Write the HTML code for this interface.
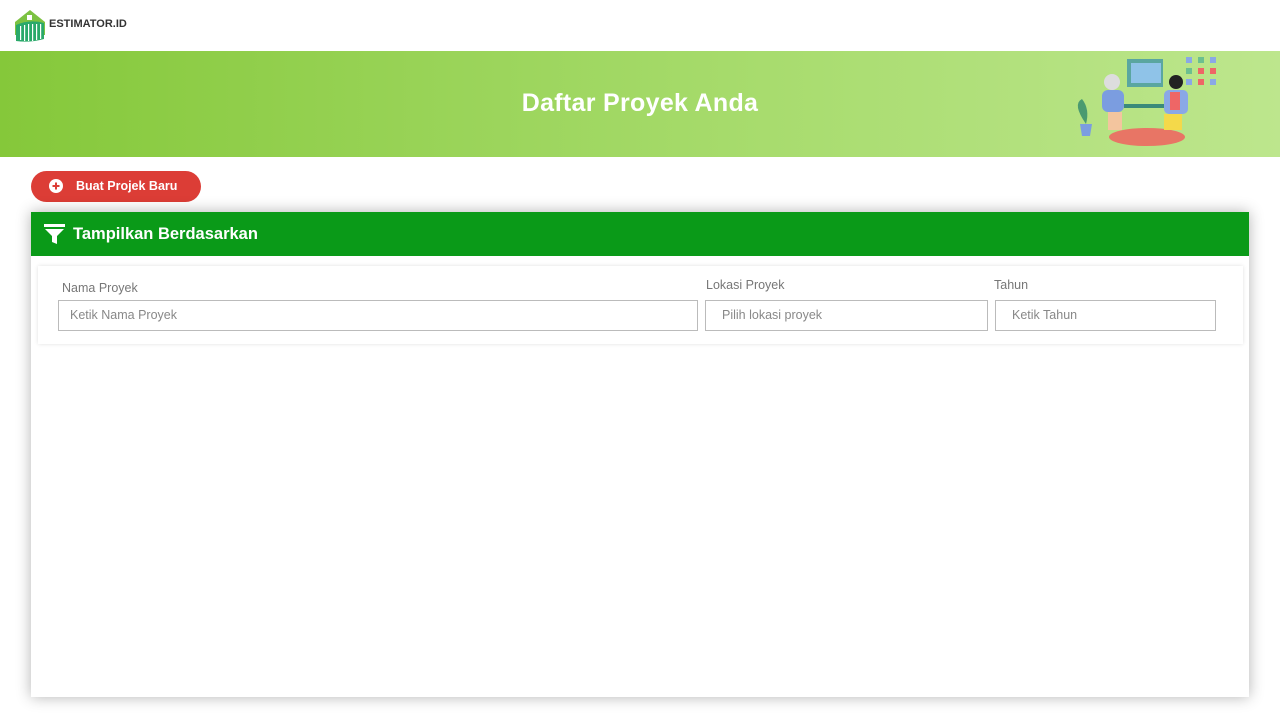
<!DOCTYPE html>
<html><head><style>
*{margin:0;padding:0;box-sizing:border-box}
body{width:1280px;height:720px;background:#fff;font-family:"Liberation Sans",sans-serif;position:relative;overflow:hidden}
.abs{position:absolute}
.banner{left:0;top:51px;width:1280px;height:106px;background:linear-gradient(90deg,#85c83a,#a8dc6e 60%,#bde68d)}
.banner h1{position:absolute;left:0;width:1280px;top:38px;text-align:center;color:#fff;font-size:25px;font-weight:bold;letter-spacing:.3px}
.btn{left:31px;top:171px;width:170px;height:31px;border-radius:16px;background:#dc3d36;color:#fff;font-size:12.5px;font-weight:bold}
.card{left:31px;top:212px;width:1218px;height:485px;background:#fff;box-shadow:0 0 14px rgba(0,0,0,.3)}
.ch{left:0;top:0;width:1218px;height:44px;background:#0a9a18;color:#fff;font-weight:bold;font-size:16.5px}
.inner{left:7px;top:54px;width:1205px;height:78px;box-shadow:0 0 4px rgba(0,0,0,.12)}
.lbl{font-size:12.5px;color:#777}
.inp{border:1px solid #bbb;height:31px;font-size:12.5px;color:#888;padding:7px 0 0 11px}
</style></head><body>
<svg class="abs" style="left:14px;top:9px" width="32" height="34" viewBox="0 0 32 34">
<path d="M1 13 L16 1 L31 13 L31 26 L1 26Z" fill="#7cc242"/>
<rect x="13" y="6" width="5" height="5" fill="#fff"/>
<path d="M2 16 Q16 10 30 14 L30 30 Q16 34 2 32Z" fill="#2aa96a"/>
<g fill="#fff"><rect x="6" y="17" width="1.2" height="14"/><rect x="10" y="16" width="1.2" height="16"/><rect x="14" y="15" width="1.2" height="17"/><rect x="18" y="15" width="1.2" height="17"/><rect x="22" y="15" width="1.2" height="16"/><rect x="26" y="15" width="1.2" height="15"/></g>
</svg>
<div class="abs" style="left:49px;top:18px;font-size:11px;font-weight:bold;color:#333">ESTIMATOR.ID</div>
<div class="abs banner"><h1>Daftar Proyek Anda</h1>
<svg class="abs" style="left:1072px;top:3px" width="150" height="98" viewBox="0 0 150 98">
<ellipse cx="75" cy="83" rx="38" ry="9" fill="#e87565"/>
<rect x="55" y="5" width="36" height="28" fill="#5aa6a0"/><rect x="59" y="9" width="30" height="20" fill="#8fc3e8"/>
<rect x="52" y="50" width="60" height="4" fill="#3a8a7a"/>
<path d="M8 70 L20 70 L18 82 L10 82Z" fill="#7b9de0"/><path d="M14 70 Q0 50 10 45 Q18 55 14 70" fill="#4a9a70"/>
<circle cx="40" cy="28" r="8" fill="#ddd"/><rect x="30" y="36" width="22" height="22" rx="6" fill="#7b9de0"/><rect x="36" y="58" width="14" height="18" fill="#f3c59e"/>
<circle cx="104" cy="28" r="7" fill="#222"/><rect x="92" y="36" width="24" height="24" rx="5" fill="#8aa8e6"/><rect x="98" y="38" width="10" height="18" fill="#e66"/><rect x="92" y="60" width="18" height="16" fill="#f4d94a"/>
<g><rect x="114" y="3" width="6" height="6" fill="#8aa8e6"/><rect x="126" y="3" width="6" height="6" fill="#6cbf8f"/><rect x="138" y="3" width="6" height="6" fill="#8aa8e6"/><rect x="114" y="14" width="6" height="6" fill="#6cbf8f"/><rect x="126" y="14" width="6" height="6" fill="#e66"/><rect x="138" y="14" width="6" height="6" fill="#e66"/><rect x="114" y="25" width="6" height="6" fill="#8aa8e6"/><rect x="126" y="25" width="6" height="6" fill="#e66"/><rect x="138" y="25" width="6" height="6" fill="#8aa8e6"/></g>
</svg></div>
<div class="abs btn"><svg class="abs" style="left:18px;top:8px" width="14" height="14"><circle cx="7" cy="7" r="7" fill="#fff"/><path d="M7 3.5V10.5M3.5 7H10.5" stroke="#dc3d36" stroke-width="2"/></svg><span class="abs" style="left:45px;top:8px">Buat Projek Baru</span></div>
<div class="abs card">
<div class="abs ch"><svg class="abs" style="left:13px;top:12px" width="21" height="20" viewBox="0 0 21 20"><path d="M0 0H21V3H0Z" fill="#fff"/><path d="M1 5H20L13 12V20L8 18V12Z" fill="#fff"/></svg><span class="abs" style="left:42px;top:13px">Tampilkan Berdasarkan</span></div>
<div class="abs inner">
<div class="abs lbl" style="left:24px;top:15px">Nama Proyek</div>
<div class="abs lbl" style="left:668px;top:12px">Lokasi Proyek</div>
<div class="abs lbl" style="left:956px;top:12px">Tahun</div>
<div class="abs inp" style="left:20px;top:34px;width:640px">Ketik Nama Proyek</div>
<div class="abs inp" style="left:667px;top:34px;width:283px;padding-left:16px">Pilih lokasi proyek</div>
<div class="abs inp" style="left:957px;top:34px;width:221px;padding-left:16px">Ketik Tahun</div>
</div></div>
</body></html>
